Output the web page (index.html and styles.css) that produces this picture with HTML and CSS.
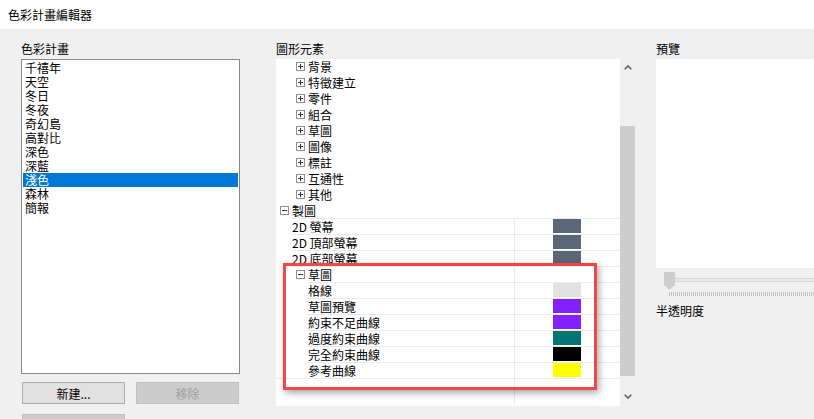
FILE: index.html
```html
<!DOCTYPE html>
<html lang="zh-Hant">
<head>
    <meta charset="UTF-8">
    <title>色彩計畫編輯器</title>
    <link rel="stylesheet" href="styles.css">
</head>
<body>
    <div class="titlebar">色彩計畫編輯器</div>

    <div class="main">
        <!-- color schemes -->
        <div class="col-schemes">
            <div class="label">色彩計畫</div>
            <ul class="listbox">
                <li>千禧年</li>
                <li>天空</li>
                <li>冬日</li>
                <li>冬夜</li>
                <li>奇幻島</li>
                <li>高對比</li>
                <li>深色</li>
                <li>深藍</li>
                <li class="selected">淺色</li>
                <li>森林</li>
                <li>簡報</li>
            </ul>
            <div class="buttons">
                <button class="btn">新建...</button>
                <button class="btn disabled">移除</button>
            </div>
            <div class="buttons second">
                <button class="btn disabled"></button>
            </div>
        </div>

        <!-- graphic elements tree -->
        <div class="col-elements">
            <div class="label">圖形元素</div>
            <div class="tree-wrap">
                <div class="tree">
                    <div class="tree-inner">
                        <div class="node lvl1"><svg class="exp" width="9" height="9"><rect x=".5" y=".5" width="8" height="8" fill="#fff" stroke="#8f8f8f"/><path d="M2 4.5h5M4.5 2v5" stroke="#22395f"/></svg>背景</div>
                        <div class="node lvl1"><svg class="exp" width="9" height="9"><rect x=".5" y=".5" width="8" height="8" fill="#fff" stroke="#8f8f8f"/><path d="M2 4.5h5M4.5 2v5" stroke="#22395f"/></svg>特徵建立</div>
                        <div class="node lvl1"><svg class="exp" width="9" height="9"><rect x=".5" y=".5" width="8" height="8" fill="#fff" stroke="#8f8f8f"/><path d="M2 4.5h5M4.5 2v5" stroke="#22395f"/></svg>零件</div>
                        <div class="node lvl1"><svg class="exp" width="9" height="9"><rect x=".5" y=".5" width="8" height="8" fill="#fff" stroke="#8f8f8f"/><path d="M2 4.5h5M4.5 2v5" stroke="#22395f"/></svg>組合</div>
                        <div class="node lvl1"><svg class="exp" width="9" height="9"><rect x=".5" y=".5" width="8" height="8" fill="#fff" stroke="#8f8f8f"/><path d="M2 4.5h5M4.5 2v5" stroke="#22395f"/></svg>草圖</div>
                        <div class="node lvl1"><svg class="exp" width="9" height="9"><rect x=".5" y=".5" width="8" height="8" fill="#fff" stroke="#8f8f8f"/><path d="M2 4.5h5M4.5 2v5" stroke="#22395f"/></svg>圖像</div>
                        <div class="node lvl1"><svg class="exp" width="9" height="9"><rect x=".5" y=".5" width="8" height="8" fill="#fff" stroke="#8f8f8f"/><path d="M2 4.5h5M4.5 2v5" stroke="#22395f"/></svg>標註</div>
                        <div class="node lvl1"><svg class="exp" width="9" height="9"><rect x=".5" y=".5" width="8" height="8" fill="#fff" stroke="#8f8f8f"/><path d="M2 4.5h5M4.5 2v5" stroke="#22395f"/></svg>互通性</div>
                        <div class="node lvl1"><svg class="exp" width="9" height="9"><rect x=".5" y=".5" width="8" height="8" fill="#fff" stroke="#8f8f8f"/><path d="M2 4.5h5M4.5 2v5" stroke="#22395f"/></svg>其他</div>
                        <div class="node lvl0"><svg class="exp" width="9" height="9"><rect x=".5" y=".5" width="8" height="8" fill="#fff" stroke="#8f8f8f"/><path d="M2 4.5h5" stroke="#22395f"/></svg>製圖</div>

                        <div class="prop ind1">
                            <div class="prop-name">2D 螢幕</div>
                            <div class="prop-value"><span class="swatch" style="background:#5b6679"></span></div>
                        </div>
                        <div class="prop ind1">
                            <div class="prop-name">2D 頂部螢幕</div>
                            <div class="prop-value"><span class="swatch" style="background:#5b6679"></span></div>
                        </div>
                        <div class="prop ind1">
                            <div class="prop-name">2D 底部螢幕</div>
                            <div class="prop-value"><span class="swatch" style="background:#5b6679"></span></div>
                        </div>
                        <div class="prop ind1 group">
                            <div class="prop-name"><svg class="exp" width="9" height="9"><rect x=".5" y=".5" width="8" height="8" fill="#fff" stroke="#8f8f8f"/><path d="M2 4.5h5" stroke="#22395f"/></svg>草圖</div>
                            <div class="prop-value"></div>
                        </div>
                        <div class="prop ind2">
                            <div class="prop-name">格線</div>
                            <div class="prop-value"><span class="swatch" style="background:#e1e1e1"></span></div>
                        </div>
                        <div class="prop ind2">
                            <div class="prop-name">草圖預覽</div>
                            <div class="prop-value"><span class="swatch" style="background:#8221fe"></span></div>
                        </div>
                        <div class="prop ind2">
                            <div class="prop-name">約束不足曲線</div>
                            <div class="prop-value"><span class="swatch" style="background:#8221fe"></span></div>
                        </div>
                        <div class="prop ind2">
                            <div class="prop-name">過度約束曲線</div>
                            <div class="prop-value"><span class="swatch" style="background:#037673"></span></div>
                        </div>
                        <div class="prop ind2">
                            <div class="prop-name">完全約束曲線</div>
                            <div class="prop-value"><span class="swatch" style="background:#000000"></span></div>
                        </div>
                        <div class="prop ind2">
                            <div class="prop-name">參考曲線</div>
                            <div class="prop-value"><span class="swatch" style="background:#ffff00"></span></div>
                        </div>
                        <div class="prop filler">
                            <div class="prop-name"></div>
                            <div class="prop-value"></div>
                        </div>
                    </div>
                    <!-- annotation over the sketch group -->
                    <div class="callout"></div>
                </div>
                <div class="vscroll">
                    <div class="arrow"><svg width="8" height="5"><path d="M.7 4.3L4 1l3.3 3.3" fill="none" stroke="#606060" stroke-width="1.6"/></svg></div>
                    <div class="thumb"></div>
                    <div class="arrow down"><svg width="8" height="5"><path d="M.7 .7L4 4l3.3-3.3" fill="none" stroke="#606060" stroke-width="1.6"/></svg></div>
                </div>
            </div>
        </div>

        <!-- preview -->
        <div class="col-preview">
            <div class="label">預覽</div>
            <div class="preview"></div>
            <div class="slider">
                <svg class="slider-thumb" width="11" height="18"><path d="M0 0h11v13l-5.5 5L0 13z" fill="#cdcdcd"/></svg>
                <div class="track"></div>
            </div>
            <div class="ticks"></div>
            <div class="label opacity">半透明度</div>
        </div>
    </div>
</body>
</html>
```

FILE: styles.css
```css
body {
    margin: 0;
    width: 814px;
    height: 419px;
    overflow: hidden;
    background: #f0f0f0;
    font-family: "Noto Sans CJK TC", "Noto Sans", sans-serif;
    font-size: 12px;
    color: #000;
}

.titlebar {
    height: 29px;
    line-height: 30px;
    padding-left: 8px;
    background: #fff;
}

.main {
    display: flex;
    padding: 12px 0 0 21px;
}

.label {
    height: 16px;
    line-height: 16px;
    margin-bottom: 2px;
}

/* schemes list */
.col-schemes {
    width: 219px;
    margin-right: 36px;
    flex-shrink: 0;
}
.listbox {
    list-style: none;
    margin: 0;
    box-sizing: border-box;
    height: 315px;
    padding: 1px;
    border: 1px solid #828790;
    background: #fff;
}
.listbox li {
    height: 14px;
    line-height: 14px;
    padding-left: 2px;
    white-space: nowrap;
}
.listbox li.selected {
    background: #0078d7;
    color: #fff;
}
.buttons {
    display: flex;
    gap: 11px;
    margin-top: 8px;
    padding-left: 1px;
}
.buttons.second {
    margin-top: 10px;
}
.btn {
    width: 103px;
    height: 22px;
    padding: 0;
    border: 1px solid #adadad;
    background: #e1e1e1;
    font-family: inherit;
    font-size: 12px;
    color: #000;
}
.btn.disabled {
    background: #cccccc;
    border-color: #bfbfbf;
    color: #a0a0a0;
}

/* element tree */
.col-elements {
    width: 359px;
    margin-right: 21px;
    flex-shrink: 0;
}
.tree-wrap {
    display: flex;
    height: 347px;
}
.tree {
    position: relative;
    width: 344px;
    background: #fff;
    overflow: hidden;
}
.tree-inner {
    display: flex;
    flex-direction: column;
    height: 100%;
    margin-top: -1px;
}
.node {
    display: flex;
    align-items: center;
    height: 16px;
    white-space: nowrap;
}
.node.lvl0 { padding-left: 4px; }
.node.lvl1 { padding-left: 20px; }
.exp {
    flex-shrink: 0;
    margin-right: 3px;
}

.prop {
    display: flex;
    height: 16px;
    box-sizing: border-box;
    border-top: 1px solid #ebebeb;
}
.prop.ind1 { margin-left: 16px; }
.prop.ind2 { margin-left: 32px; }
.prop-name {
    display: flex;
    align-items: center;
    flex: 1;
    white-space: nowrap;
}
.prop.group .prop-name { padding-left: 4px; }
.prop-value {
    width: 106px;
    border-left: 1px solid #ebebeb;
    padding-left: 38px;
    box-sizing: border-box;
}
.swatch {
    display: block;
    width: 28px;
    height: 14px;
}
.prop.filler {
    flex: 1;
}

.callout {
    position: absolute;
    left: 7px;
    top: 204px;
    width: 314px;
    height: 127px;
    box-sizing: border-box;
    border: 3px solid #f04848;
    box-shadow: 2px 3px 7px rgba(0, 0, 0, 0.35);
}

.vscroll {
    display: flex;
    flex-direction: column;
    width: 15px;
    background: #efefef;
}
.vscroll .arrow {
    display: flex;
    justify-content: center;
    align-items: center;
    height: 17px;
}
.vscroll .arrow.down {
    margin-top: auto;
    height: 19px;
}
.thumb {
    margin-top: 50px;
    height: 250px;
    background: #cdcdcd;
}

/* preview */
.col-preview {
    width: 170px;
    flex-shrink: 0;
}
.preview {
    height: 209px;
    background: #fff;
}
.slider {
    display: flex;
    margin-top: 4px;
    padding-left: 8px;
    height: 18px;
}
.slider-thumb {
    flex-shrink: 0;
}
.track {
    flex: 1;
    height: 4px;
    margin-top: 6px;
    box-sizing: border-box;
    border-top: 1px solid #d6d6d6;
    border-bottom: 1px solid #d6d6d6;
    background: #e8e8e8;
}
.ticks {
    height: 4px;
    margin: 2px 0 0 13px;
    background: repeating-linear-gradient(to right, #c2c2c2 0 1px, transparent 1px 2px);
}
.label.opacity {
    margin-top: 7px;
}
```
